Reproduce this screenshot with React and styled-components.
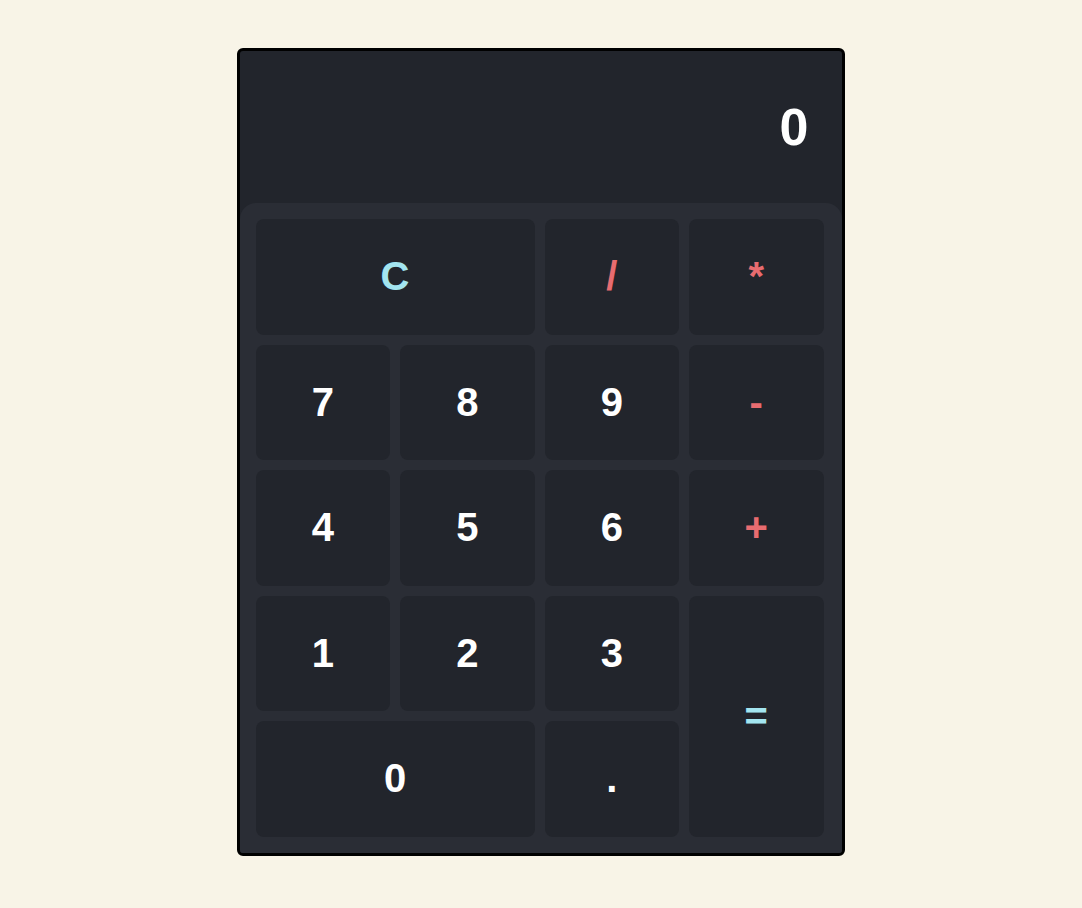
import React, { useState } from 'react'
import styled, { createGlobalStyle } from 'styled-components'

const Global = createGlobalStyle`
  body {
    margin: 0;
    background: #f8f4e7;
    font-family: 'Liberation Sans', Arial, sans-serif;
  }
`

const Page = styled.div`
  display: flex;
  justify-content: center;
  padding: 48px 1px 0 0;
`

const Calculator = styled.div`
  width: 602px;
  border: 3px solid #000;
  border-radius: 6px;
  background: #22252c;
  overflow: hidden;
`

const Display = styled.div`
  height: 152px;
  display: flex;
  align-items: center;
  justify-content: flex-end;
  padding: 0 33px;
  color: #fff;
  font-size: 52px;
  font-weight: 700;
`

const Keypad = styled.div`
  background: #2a2d35;
  border-radius: 16px 16px 0 0;
  padding: 16px;
  display: grid;
  grid-template-columns: repeat(4, 134.5px);
  grid-auto-rows: 115.5px;
  gap: 10px;
`

const Key = styled.button`
  border: none;
  border-radius: 8px;
  background: #22252c;
  color: ${p => (p.$kind === 'op' ? '#e86c70' : p.$kind === 'fn' ? '#a3e5f0' : '#fff')};
  font-family: 'Liberation Sans', Arial, sans-serif;
  font-size: 40px;
  font-weight: 700;
  cursor: pointer;
  grid-column: span ${p => p.$w || 1};
  grid-row: span ${p => p.$h || 1};
  &:hover {
    background: #1e2127;
  }
`

const keys = [
  { k: 'C', kind: 'fn', w: 2 },
  { k: '/', kind: 'op' },
  { k: '*', kind: 'op' },
  { k: '7' }, { k: '8' }, { k: '9' },
  { k: '-', kind: 'op' },
  { k: '4' }, { k: '5' }, { k: '6' },
  { k: '+', kind: 'op' },
  { k: '1' }, { k: '2' }, { k: '3' },
  { k: '=', kind: 'fn', h: 2 },
  { k: '0', w: 2 },
  { k: '.' },
]

const App = () => {
  const [value, setValue] = useState('0')

  const press = (k) => {
    if (k === 'C') return setValue('0')
    if (k === '=') {
      try {
        // eslint-disable-next-line no-new-func
        setValue(String(Function('return (' + value + ')')()))
      } catch (e) {
        setValue('0')
      }
      return
    }
    setValue(v => (v === '0' && k !== '.' ? k : v + k))
  }

  return (
    <Page>
      <Global />
      <Calculator>
        <Display>{value}</Display>
        <Keypad>
          {keys.map(b => (
            <Key key={b.k} $kind={b.kind} $w={b.w} $h={b.h} onClick={() => press(b.k)}>
              {b.k}
            </Key>
          ))}
        </Keypad>
      </Calculator>
    </Page>
  )
}

export default App
